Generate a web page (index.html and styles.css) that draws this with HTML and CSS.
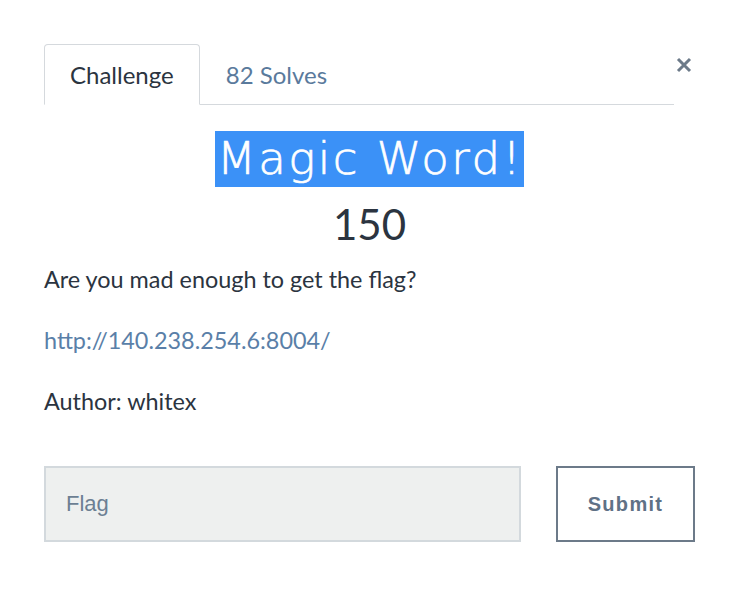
FILE: index.html
```html
<!DOCTYPE html>
<html>
<head>
<meta charset="utf-8">
<link rel="stylesheet" href="styles.css">
</head>
<body>
<div class="modal">
  <div class="header">
    <ul class="tabs">
      <li class="tab active">Challenge</li>
      <li class="tab">82 Solves</li>
    </ul>
    <button class="close" aria-label="Close">
      <svg width="16" height="16" viewBox="0 0 16 16"><path d="M2 2 L14 14 M14 2 L2 14" stroke="#6c7a89" stroke-width="3" stroke-linecap="butt"/></svg>
    </button>
  </div>
  <div class="title-wrap"><h1 class="title">Magic Word!</h1></div>
  <div class="points">150</div>
  <div class="desc">
    <p>Are you mad enough to get the flag?</p>
    <p><a class="link" href="#">http://140.238.254.6:8004/</a></p>
    <p>Author: whitex</p>
  </div>
  <form class="submit-row">
    <div class="flag-input">Flag</div>
    <button type="button" class="submit">Submit</button>
  </form>
</div>
</body>
</html>
```
FILE: styles.css
```css
html, body {
  margin: 0;
  padding: 0;
  background: #fff;
}
body {
  font-family: Lato, "Liberation Sans", sans-serif;
  color: #2b3440;
  width: 735px;
  height: 594px;
}
.modal {
  padding: 44px 40px 0 44px;
}
.header {
  display: flex;
  align-items: flex-start;
}
.tabs {
  list-style: none;
  margin: 0;
  padding: 0;
  display: flex;
  flex: 1;
  border-bottom: 1px solid #d5d9dd;
  height: 60px;
}
.tab {
  font-size: 24px;
  height: 60px;
  box-sizing: border-box;
  padding: 0 25px 0 25px;
  display: flex;
  align-items: center;
  color: #5a7a9c;
  border: 1px solid transparent;
  border-radius: 4px 4px 0 0;
}
.tab.active {
  color: #2b3440;
  border-color: #d5d9dd;
  border-bottom-color: #fff;
  height: 61px;
  background: #fff;
}
.close {
  background: none;
  border: 0;
  padding: 0;
  margin: 12px 2px 0 1px;
  width: 18px;
  height: 18px;
  display: flex;
  align-items: center;
  justify-content: center;
}
.title-wrap {
  text-align: center;
  margin-top: 26px;
}
.title {
  display: inline-block;
  margin: 0;
  font-family: "DejaVu Sans", "Open Sans", sans-serif;
  font-weight: 200;
  font-size: 45px;
  letter-spacing: 2.5px;
  -webkit-text-stroke: 0.7px #fff;
  line-height: 56px;
  height: 56px;
  color: #fff;
  background: #3b91f7;
  padding: 0 1px 0 2px;
}
.points {
  text-align: center;
  font-size: 42px;
  line-height: 50px;
  margin-top: 12px;
  color: #2b3440;
}
.desc {
  font-size: 23.4px;
  margin-top: 0;
}
.desc p {
  margin: 0;
  line-height: 61px;
}
.link {
  color: #5a7fa8;
  text-decoration: none;
}
.submit-row {
  display: flex;
  margin-top: 34px;
  width: 651px;
  justify-content: space-between;
}
.flag-input {
  width: 477px;
  height: 76px;
  box-sizing: border-box;
  background: #eef0ef;
  border: 2px solid #d3d9dd;
  font-family: "Liberation Sans", Arial, sans-serif;
  font-size: 22px;
  color: #6c7f93;
  padding-left: 20px;
  display: flex;
  align-items: center;
}
.submit {
  width: 139px;
  height: 76px;
  box-sizing: border-box;
  background: #fff;
  border: 2px solid #6c7a89;
  font-family: "Liberation Sans", Arial, sans-serif;
  font-weight: bold;
  font-size: 20px;
  letter-spacing: 1.3px;
  color: #5f7186;
}
```
